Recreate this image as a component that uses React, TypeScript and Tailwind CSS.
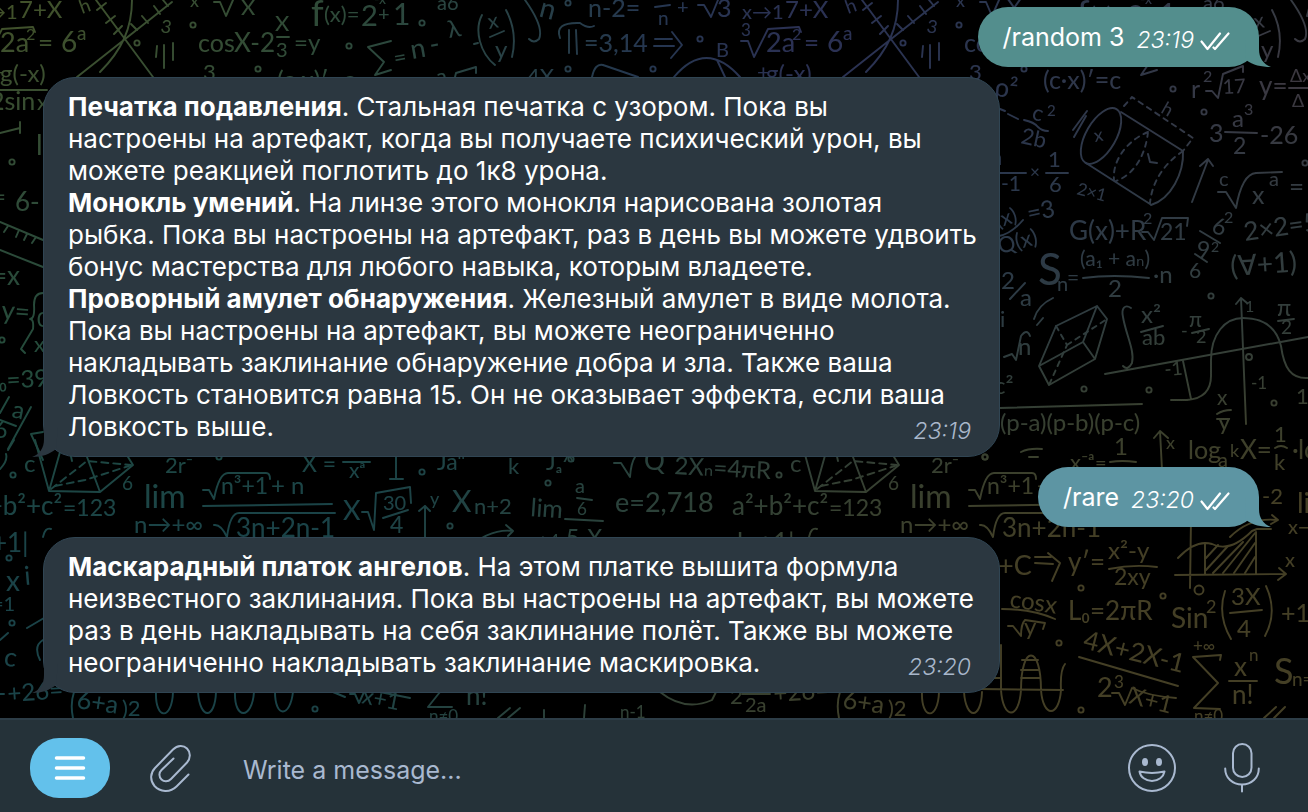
import type { ReactNode } from "react";

type Glyphs = [x: number, y: number, size: number, text: string, rotate?: number];

/* Formulas that repeat across the wallpaper, one tile is 766 wide. */
const tileText: Glyphs[] = [
  [-24, 19, 20, "x→1"], [19, 18, 24, "7+X"], [0, 52, 27, "2a"], [26, 40, 16, "2"], [38, 52, 26, "="],
  [61, 52, 28, "6"], [77, 40, 19, "a"], [-25, 36, 17, "3"], [82, 14, 19, "h", -20], [160, 32, 18, "3", 10],
  [190, 7, 18, "x"], [241, 15, 22, "X"], [198, 52, 25, "cos"], [234, 52, 26, "X-2"], [275, 31, 22, "X"],
  [276, 57, 20, "3"], [294, 51, 24, "=y"], [311, 26, 36, "f"], [324, 22, 22, "(x)="], [361, 26, 29, "2"],
  [374, 4, 14, "-x"], [378, 21, 20, "+"], [393, 25, 30, "1"], [395, 66, 22, "=", -10], [412, 59, 27, "n", -10], [431, 54, 27, "-", -10],
  [449, 38, 24, "λ", -10], [437, 10, 20, "a6"], [489, 29, 21, "x", -10], [495, 58, 24, "y"], [538, 16, 28, "n", 15],
  [588, 17, 25, "n-2="], [658, 25, 19, "n"], [677, 14, 20, "+"], [717, 17, 25, "3"], [584, 52, 25, "=3,14"],
  [716, 57, 20, "B"], [-9, 80, 22, "+"], [0, 82, 24, "g(-x)"], [-10, 110, 25, "2sin"], [37, 110, 22, "x"], [203, 80, 22, "3"],
  [277, 89, 25, "(c·x)′=c"], [527, 84, 22, "4X"], [436, 84, 22, "a"],
  [24, 472, 24, "c"], [122, 490, 19, "6"], [165, 473, 22, "2r⁻"], [-34, 515, 26, "a²+b²+c²"], [63, 516, 23, "=123"],
  [144, 508, 32, "lim"], [134, 533, 24, "n→+∞"], [221, 494, 23, "n³+1"], [271, 494, 24, "+ n"],
  [236, 537, 26, "3n+2n-1"], [343, 520, 27, "X"], [383, 510, 20, "30"], [390, 533, 23, "4"], [430, 505, 18, "y"],
  [302, 472, 23, "X ="], [349, 478, 21, "xᵃ"], [437, 470, 23, "Jaⁿ"], [508, 474, 22, "k"], [546, 470, 23, "Jₐ^"],
  [452, 512, 30, "X"], [474, 514, 22, "n+2"], [530, 516, 25, "lim", 4], [522, 547, 18, "x→4"], [575, 493, 20, "a"],
  [577, 515, 17, "6"], [566, 546, 23, "5-X"], [615, 512, 27, "e=2,718"], [644, 470, 26, "Q"], [674, 474, 24, "2Xₙ=4πR", 3],
  [617, 554, 24, "n°"], [-29, 552, 26, "lo+1|"],
  [8, 702, 24, "+26=", -4], [76, 708, 25, "6+a", 8], [122, 716, 22, ")2"], [361, 703, 23, "x+1", 11], [429, 722, 17, "n≠0"],
  [466, 705, 26, "n!"], [620, 718, 17, "n-1"], [-36, 704, 22, "2"], [-21, 712, 20, "2a"],
];

const tilePaths = [
  "M-25 41h7l6 16L2 29l31-2 2 5", "M96 0l57 77M172 2L77 77M132 0c0 28-10 50-32 72",
  "M97 10l9-7M106 23l9-7M114 34l8-8M131 24l6 6M142 16l6 7M154 6l6 8M163 0l5 6", "M157 46l-1 11M164 45v23M173 43v17",
  "M214 2h6l6 14 7-16M277 37h12", "M391 41l-23 6 16 15-9 13 16-5", "M482 15c-8 15-2 38 13 50M506 10c8 15 10 30 6 47M490 37l14-6M474 44l4-1",
  "M525 0c10 14 18 30 14 39q-5 5-10 0", "M655 7l15-2M698 5h6l7 12 7-17", "M560 38q-6-16 20-15 8 6 14 3M569 30v23M576 30l1 24",
  "M655 39h17M654 46h20M672 32l10 13-11 13", "M592 77q3-14 11-12l35 12M674 77q32-38 66 0M717 60l8 17M455 77l1-4 20-6v6",
  "M0 90h47", "M35 440l14 51 51 1 33-27-5-8M60 452l-11 39M87 457l13 35M70 452l2 9",
  "M203 490h6l5 9q5-26 14-26h38q4 0 4 6M203 506l129-2M214 525q7-1 13 12 3-24 12-24h96", "M362 512h6l6 18 2-37 34-6 1 16M383 518l25-8",
  "M425 537v-31M419 511l6-5 5 5M343 462h27M396 457v22M390 479h13", "M465 550q25-22 48-19M506 525l7 6-5 5M478 548q12-10 27-8",
  "M577 498l15 2M565 519l38 2M614 463h7l9 14q1-14 5-20M653 547v-4h72", "M156 692c-1 28 16 29 17 0M198 692c2 28 17 28 18 0M235 692c-1 28 17 28 19 0M275 692c0 26 15 26 18 0",
  "M74 692q-4 12-1 26M333 692l12 5M350 694h5l4 9 5-11M380 692l30 6M440 692l-12 15h24", "M498 718l12-10M508 718l12-10M544 710v8M585 705l-1 13",
  "M660 692q25 20 52 8l4-8M-24 694H4M43 537q2-10 8-8",
];
const tileDashes = ["M51 489l36-28 44 4", "M55 486l30-6 44-14"];
const tileDots: [number, number][] = [
  [193, 25], [137, 43], [349, 46], [422, 23], [568, 3], [568, 69], [653, 69], [700, 39], [258, 69], [13, 475],
  [422, 472], [450, 526], [548, 483], [571, 459], [219, 457], [315, 709],
];

/* Formulas drawn once, along both sides of the conversation. */
const sideText: Glyphs[] = [
  [994, 96, 26, "ρ²", 5], [1031, 119, 22, "c", 15], [1047, 116, 15, "2"], [1020, 143, 22, "2b", 12], [990, 165, 22, "n"],
  [1001, 191, 21, "-1"], [1030, 178, 17, "×"], [1048, 167, 22, "1"], [1049, 192, 22, "6"], [1076, 194, 17, "2×1", 15],
  [1095, 142, 18, "x", -10], [1160, 112, 18, "h", 30], [1191, 98, 25, "r"], [1203, 82, 16, "2"], [1223, 94, 20, "17", -3],
  [1259, 95, 26, "y="], [1290, 82, 18, "Δx"], [1292, 107, 18, "Δ"], [1209, 142, 25, "3"], [1232, 127, 24, "a"],
  [1244, 115, 16, "3"], [1233, 154, 23, "2"], [1260, 144, 25, "-26"], [1219, 186, 20, "c"], [1252, 204, 25, "x"],
  [1269, 186, 20, "a"], [1289, 196, 26, "="], [998, 228, 21, "(x)", -18], [1000, 254, 22, "Q(x)", -15], [1029, 222, 24, "=3", -12],
  [1069, 240, 26, "G(x)+R"], [1143, 224, 16, "2"], [1160, 240, 23, "21"], [1211, 233, 23, "6", 12], [1224, 223, 16, "2"],
  [1197, 258, 23, "9"], [1211, 252, 14, "2"], [1189, 278, 21, "6"], [1245, 241, 26, "2×2=5", -8], [1231, 276, 28, "(∀+1)", -4],
  [1038, 285, 44, "S"], [1057, 291, 20, "n"], [1067, 285, 21, "="], [1080, 266, 21, "(a₁ + aₙ)"], [1108, 297, 24, "2"],
  [1153, 283, 24, "·n"], [1001, 289, 24, "2"], [1020, 306, 24, "a"], [1000, 327, 22, "i"], [1018, 355, 24, "n"], [994, 394, 24, "c²"],
  [1141, 323, 24, "x²"], [1142, 345, 22, "ab"], [1181, 337, 18, "-"], [1189, 327, 21, "π"], [1196, 343, 18, "2"],
  [1165, 376, 19, "-1", -5], [1245, 312, 16, "1"], [1251, 389, 17, "-1"], [1277, 316, 23, "π"], [1281, 334, 19, "2"],
  [1296, 404, 22, "11"], [1000, 431, 24, "(p-a)(p-b)(p-c)"], [1217, 405, 21, "x"], [1218, 430, 24, "y"], [1166, 449, 18, "x"],
  [1070, 470, 22, "x⁻ᵃ"], [1095, 470, 20, "="], [1114, 455, 24, "1"], [1188, 459, 25, "log"], [1218, 467, 20, "a"],
  [1230, 457, 18, "k"], [1240, 459, 26, "X="], [1274, 442, 22, "1"], [1274, 470, 22, "k"], [1292, 459, 26, "·lo"],
  [1262, 504, 22, "-2"], [1297, 513, 28, "li"], [1288, 534, 20, "x→"], [998, 575, 27, "+C"], [1068, 571, 26, "y′="],
  [1108, 559, 24, "x²-y"], [1114, 585, 23, "2xy"], [1285, 567, 20, "x"], [1009, 607, 24, "cosx", 8], [1024, 635, 24, "y"],
  [1068, 620, 26, "L₀=2πR"], [1171, 628, 28, "Sin"], [1206, 613, 18, "2"], [1231, 605, 24, "3X"], [1237, 637, 24, "4"],
  [1281, 622, 25, "+1"], [1082, 648, 26, "4X+2X-1", 14], [1097, 697, 27, "2"], [1114, 688, 17, "3"], [1128, 703, 24, "X+1", 14],
  [1193, 652, 17, "+∞"], [1234, 676, 26, "x"], [1249, 661, 17, "n"], [1232, 704, 26, "n!"], [1194, 722, 17, "n≠0"], [1274, 684, 36, "S"],
  [1292, 686, 19, "n="], [36, 155, 28, "lo"], [-8, 205, 24, "="], [15, 211, 26, "6-"], [-8, 285, 26, "=x"], [1, 319, 26, "y=", 4],
  [37, 327, 22, "0"], [34, 352, 22, "x"], [-1, 389, 24, "₀=39", -3], [11, 417, 24, "a", 12], [-6, 438, 23, "6"], [6, 591, 28, "x"],
  [25, 585, 26, "i", -5], [-8, 611, 20, "=1"], [3, 665, 26, "c", 10],
];

const sidePaths = [
  "M1000 109l5 2M1008 114l10 5M1024 120q10 2 14 7 4 4 10 4M1073 130l14-19M1074 137l12-21", "M1121 112l62 39M1086 163l64 41M1183 151c1 22-12 48-32 54",
  "M1148 154l2 8 7 1M1000 173h26M1046 173h22M1206 91h6l6 7 5-24 20-8v6M1289 88h19M1225 132l32 1", "M1192 202l16-42M1200 166l8-7 5 7",
  "M1218 192h8l10 16q6-34 20-35l26-1M999 236q12-2 24-16", "M1142 232h6l6 8 8-22h26l-1 8M1200 231l20 12M1195 254l12 8M1083 278q30-4 66 0M1010 299l15-16",
  "M1034 319q4-14 19-21M1037 325l6-7M1004 357l8-3 4 6 5-24q6-8 9 0", "M1039 366l17-40 41-20 10 13-12 40-46 26zM1039 366l44-24 14-36M1083 342l12 17",
  "M1131 308c-6-4-10 0-8 9 3 18 12 34 9 46q-4 8-9 3", "M1141 332l22-6M1192 333l17-4M1278 321l16-2M1105 374l203-37M1241 298l5 126M1236 304l5-6 6 5",
  "M1171 400h16q24-2 24-24v-16c0-26 14-42 32-42 24 0 34 12 38 28 3 22 10 33 27 32M1183 361l8 38M1000 408l142-4",
  "M1217 414q6-4 14-4M1217 419h12M1162 470l-2-39M1154 438l6-7 8 7M1021 452q8-4 21-3M1029 457h9M1110 462q12-2 26 0M1275 448q6-4 12 0",
  "M1191 520l-1 68M1175 575l110-1M1279 568l7 6-8 6M1178 558q18-19 34-14 18 9 40-13l5-2h14M1205 543v31M1256 532v42",
  "M1206 558l12-13M1206 570l22-24M1213 573l30-31M1223 573l32-40M1234 573l21-30M1245 573l10-16M1230 537q20-20 47-17M1272 515l6 5-7 4",
  "M1035 557h16M1035 563l18 1M1048 553l12 10-8 18", "M1109 569q24-5 48-2M1002 609q30 0 53 10M1008 626h5l8 10q0-12 4-16l20 3-2 6",
  "M1225 591q-8 24 6 48M1266 586q12 26-1 50M1230 613l32-3M1079 657l99 29M1112 693h7l6 12 7-17q16 8 44 10M1220 660l1-5-28 2 25 26-24 25 26 1M1229 681h28",
  "M1001 645v45c2 30 18 30 20 0 0-46 20-46 20 0 2 28 18 28 20 0q-1-20 4-26M980 689l83 1M1022 660h16M1021 670h18M1021 678h19M1000 678h-8",
  "M1264 718l12-11M1274 718l11-11", "M0 133l20-5M20 122v11M0 222l43 18M0 250l43 17M8 226l-4 6M19 230l-3 7M27 234l-3 6M36 237l-4 6",
  "M43 293q-9 0-9 12 1 14-4 14 4 0 3 10l-12 20 4 4M0 413l9-16M31 407L8 449M0 420l16 6M43 432l-12 2 12 26M0 469q8-8 6-15M8 450l6-10M27 628l17-10M43 640q-10 6-3 20M0 640l8-7",
];
const sideDots: [number, number][] = [
  [1173, 89], [1204, 112], [1305, 163], [1211, 296], [1084, 389], [1149, 390], [1274, 403], [1081, 588], [1163, 596],
  [1059, 643], [1081, 710], [12, 162], [2, 340], [9, 558], [12, 623], [985, 457],
];

function Formulas({ items }: { items: Glyphs[] }) {
  return (
    <g fill="white" stroke="none">
      {items.map(([x, y, size, text, rotate = 0], i) => (
        <text key={i} x={x} y={y} fontSize={size} transform={`rotate(${rotate} ${x} ${y})`}>
          {text}
        </text>
      ))}
    </g>
  );
}

function Tile() {
  return (
    <>
      <Formulas items={tileText} />
      {tilePaths.map((d) => <path key={d} d={d} />)}
      {tileDashes.map((d) => <path key={d} d={d} strokeDasharray="7 5" />)}
      {tileDots.map(([x, y]) => <circle key={`${x}-${y}`} cx={x} cy={y} r="2.6" />)}
    </>
  );
}

function Wallpaper() {
  return (
    <div aria-hidden="true" className="absolute inset-0 isolate overflow-hidden bg-black">
      <svg
        className="h-full w-full font-['Lato','DejaVu_Sans',sans-serif] font-normal"
        fill="none" stroke="white" strokeWidth="1.9" strokeLinecap="round" strokeLinejoin="round"
      >
        <clipPath id="repeat-area">
          <path d="M700 0H1308V66H1165V95H1040V478H1110V540H1000V718H700Z" />
        </clipPath>
        <Tile />
        <g clipPath="url(#repeat-area)">
          <g transform="translate(766 0)"><Tile /></g>
        </g>
        <Formulas items={sideText} />
        {sidePaths.map((d) => <path key={d} d={d} />)}
        <ellipse cx="1101" cy="136" rx="15" ry="31" transform="rotate(30 1101 136)" />
        <g strokeDasharray="5 5">
          <path d="M1124 106l8-9 61 41-10 13" />
          <path d="M1148 132c-20 8-36 28-34 48M1148 132c-2 20-12 42-32 49M1183 151c-18 12-31 30-33 52" />
          <path d="M1056 326l11 19-18 40M1067 345l40-26" />
        </g>
        <circle cx="1249" cy="357" r="3" />
        <circle cx="1199" cy="590" r="4.5" />
        {sideDots.map(([x, y]) => <circle key={`${x}-${y}`} cx={x} cy={y} r="2.6" />)}
      </svg>
      <div className="absolute inset-0 bg-[#1a4348] bg-[radial-gradient(at_0%_0%,#435229,transparent_35%),radial-gradient(at_62%_5%,#2b3054,transparent_42%),radial-gradient(at_100%_10%,#3d3840,transparent_35%),radial-gradient(at_100%_85%,#443f25_20%,transparent_55%),radial-gradient(at_0%_45%,#214b3c,transparent_30%)] mix-blend-multiply" />
    </div>
  );
}

function Ticks() {
  return (
    <svg width="30" height="20" viewBox="0 0 30 20" fill="none" stroke="white" strokeWidth="2.2" strokeLinecap="round" strokeLinejoin="round" role="img" aria-label="Read">
      <path d="M1.5 10.5L7.5 18 20 2.5M13.5 16.5l1.5 1.5L28.5 2.5" />
    </svg>
  );
}

function Outgoing({ text, time, teal }: { text: string; time: string; teal?: boolean }) {
  return (
    <article
      className={`relative flex h-[60px] items-center self-end rounded-[30px] pr-[29px] pl-[25px] ${teal ? "bg-[#538e8d] text-[#538e8d]" : "bg-[#5d95a3] text-[#5d95a3]"}`}
    >
      <p className="text-[25px] leading-8 text-white">{text}</p>
      <time className="mt-1.5 ml-3 text-[23px] leading-8 font-light text-white italic">{time}</time>
      <span className="mt-2 ml-1.5"><Ticks /></span>
      <svg className="absolute -right-3 bottom-0" width="26" height="30" viewBox="0 0 26 30" fill="currentColor" aria-hidden="true">
        <path d="M14 0v12c0 9 4 15 12 18-10 0-18-2-25-7L0 0z" />
      </svg>
    </article>
  );
}

function Incoming({ children, time }: { children: ReactNode; time: string }) {
  return (
    <article className="relative w-full max-w-[957px] self-start rounded-[32px] border border-[#304553] bg-[#2b3740] py-[13px] pl-6">
      <p className="text-[26px] leading-8 whitespace-nowrap text-white">{children}</p>
      <time className="absolute right-7 bottom-[9px] text-[23px] leading-8 font-light text-[#a9b7cb] italic">{time}</time>
      <svg className="absolute -bottom-px -left-3" width="26" height="30" viewBox="0 0 26 30" fill="#2b3740" aria-hidden="true">
        <path d="M12 0v12c0 9-4 15-12 18 10 0 18-3 24-8L26 0z" />
      </svg>
    </article>
  );
}

function Composer() {
  return (
    <form className="relative flex h-[94px] items-center border-t-2 border-[#2d3d47] bg-[#253239] pt-1 pr-12 pl-[30px] text-[#a9b9d0]" onSubmit={(e) => e.preventDefault()}>
      <button type="button" aria-label="Menu" className="flex h-[60px] w-20 shrink-0 items-center justify-center rounded-[29px] bg-[#63c1eb]">
        <svg width="32" height="26" viewBox="0 0 32 26" fill="none" stroke="white" strokeWidth="3.5" strokeLinecap="round">
          <path d="M2.5 3h27M2.5 13h27M2.5 23h27" />
        </svg>
      </button>
      <button type="button" aria-label="Attach a file" className="ml-10 shrink-0">
        <svg width="41" height="48" viewBox="0 0 41 48" fill="none" stroke="currentColor" strokeWidth="2" strokeLinecap="round" strokeLinejoin="round">
          <path d="M38.5 30.5L26.5 42.5C20 49 10 48 4.500 42C-.5 36 .5 28.500 5 24L23 5.500C27.500 1 33.500 1 37 4.500C41 8.500 40.500 14.500 37 18.500L21 35C18 38 14 38 11.500 35.500C8.500 32.500 9 28.500 11.500 26L23.500 14.500" />
        </svg>
      </button>
      <input aria-label="Message" placeholder="Write a message..." className="mt-1 ml-[52px] min-w-0 flex-1 bg-transparent text-[25px] leading-8 outline-none placeholder:text-[#a9b9d0]" />
      <button type="button" aria-label="Emoji" className="shrink-0">
        <svg width="48" height="48" viewBox="0 0 48 48" fill="none" stroke="currentColor" strokeWidth="2" strokeLinejoin="round">
          <circle cx="24" cy="24" r="23" />
          <ellipse cx="17" cy="18" rx="3" ry="4" fill="currentColor" stroke="none" />
          <ellipse cx="31" cy="18" rx="3" ry="4" fill="currentColor" stroke="none" />
          <path d="M11.500 27.500C19 29.200 29 29.200 36.500 27.500C35.500 33 30.500 37 24 37S12.500 33 11.500 27.500Z" />
        </svg>
      </button>
      <button type="button" aria-label="Record a voice message" className="ml-12 shrink-0">
        <svg width="36" height="50" viewBox="0 0 36 50" fill="none" stroke="currentColor" strokeWidth="2" strokeLinecap="round">
          <rect x="9" y="1" width="18.500" height="33" rx="9.250" />
          <path d="M1.200 25.500C1.200 35 8.500 41.500 18 41.500S34.800 35 34.800 25.500M18 41.500V48.500" />
        </svg>
      </button>
    </form>
  );
}

export default function App() {
  return (
    <div className="relative flex min-h-screen flex-col overflow-hidden bg-black font-['Inter',sans-serif]">
      <Wallpaper />
      <main className="relative flex flex-1 flex-col gap-2.5 pt-[7px] pr-[49px] pb-6 pl-[43px]">
        <Outgoing text="/random 3" time="23:19" teal />
        <Incoming time="23:19">
          <b className="font-bold">Печатка подавления</b>. Стальная печатка с узором. Пока вы<br />
          настроены на артефакт, когда вы получаете психический урон, вы<br />
          можете реакцией поглотить до 1к8 урона.<br />
          <b className="font-bold">Монокль умений</b>. На линзе этого монокля нарисована золотая<br />
          рыбка. Пока вы настроены на артефакт, раз в день вы можете удвоить<br />
          бонус мастерства для любого навыка, которым владеете.<br />
          <b className="font-bold">Проворный амулет обнаружения</b>. Железный амулет в виде молота.<br />
          Пока вы настроены на артефакт, вы можете неограниченно<br />
          накладывать заклинание обнаружение добра и зла. Также ваша<br />
          Ловкость становится равна 15. Он не оказывает эффекта, если ваша<br />
          Ловкость выше.
        </Incoming>
        <Outgoing text="/rare" time="23:20" />
        <Incoming time="23:20">
          <b className="font-bold">Маскарадный платок ангелов</b>. На этом платке вышита формула<br />
          неизвестного заклинания. Пока вы настроены на артефакт, вы можете<br />
          раз в день накладывать на себя заклинание полёт. Также вы можете<br />
          неограниченно накладывать заклинание маскировка.
        </Incoming>
      </main>
      <Composer />
    </div>
  );
}
